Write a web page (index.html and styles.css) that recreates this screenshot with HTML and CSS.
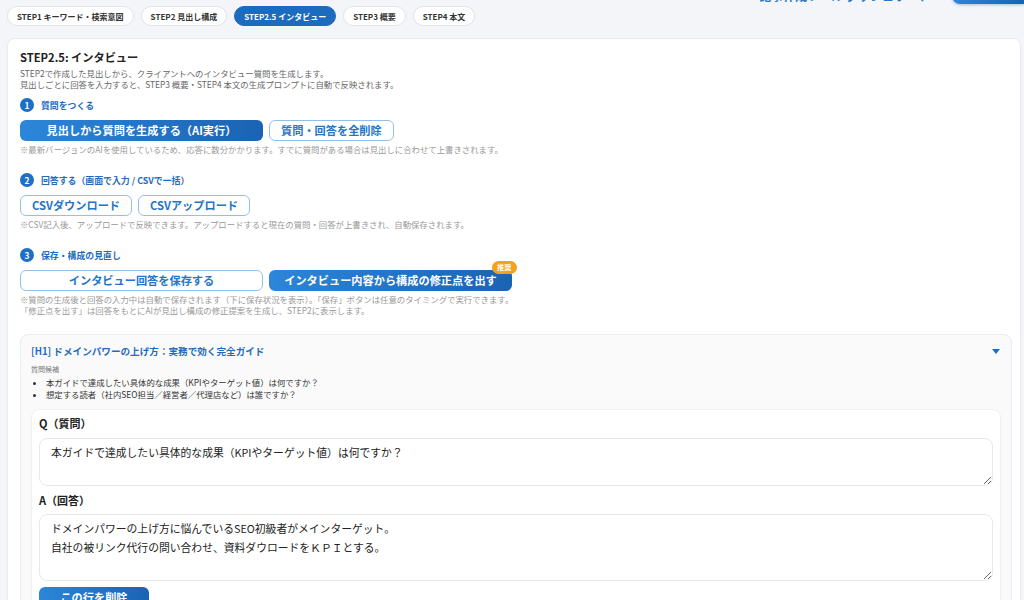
FILE: index.html
```html
<!DOCTYPE html>
<html lang="ja">
<head>
<meta charset="utf-8">
<title>STEP2.5 インタビュー</title>
<link rel="stylesheet" href="styles.css">
</head>
<body>
<header class="topbar">
  <span class="top-link">記事作成ツール ダッシュボード</span>
  <button class="top-btn">ログアウト</button>
</header>

<nav class="tabs">
  <a class="tab">STEP1 キーワード・検索意図</a>
  <a class="tab">STEP2 見出し構成</a>
  <a class="tab active">STEP2.5 インタビュー</a>
  <a class="tab">STEP3 概要</a>
  <a class="tab">STEP4 本文</a>
</nav>

<main class="card">
  <h1 class="title">STEP2.5: インタビュー</h1>
  <p class="desc">STEP2で作成した見出しから、クライアントへのインタビュー質問を生成します。<br>見出しごとに回答を入力すると、STEP3 概要・STEP4 本文の生成プロンプトに自動で反映されます。</p>

  <section class="step first">
    <div class="step-head"><span class="num">1</span><span class="step-label">質問をつくる</span></div>
    <div class="btn-row">
      <button class="btn fill wide">見出しから質問を生成する（AI実行）</button>
      <button class="btn outline">質問・回答を全削除</button>
    </div>
    <p class="note">※最新バージョンのAIを使用しているため、応答に数分かかります。すでに質問がある場合は見出しに合わせて上書きされます。</p>
  </section>

  <section class="step">
    <div class="step-head"><span class="num">2</span><span class="step-label">回答する（画面で入力 / CSVで一括）</span></div>
    <div class="btn-row">
      <button class="btn outline">CSVダウンロード</button>
      <button class="btn outline">CSVアップロード</button>
    </div>
    <p class="note">※CSV記入後、アップロードで反映できます。アップロードすると現在の質問・回答が上書きされ、自動保存されます。</p>
  </section>

  <section class="step">
    <div class="step-head"><span class="num">3</span><span class="step-label">保存・構成の見直し</span></div>
    <div class="btn-row">
      <button class="btn outline wide">インタビュー回答を保存する</button>
      <button class="btn fill wide badge-host">インタビュー内容から構成の修正点を出す<span class="badge">推奨</span></button>
    </div>
    <p class="note">※質問の生成後と回答の入力中は自動で保存されます（下に保存状況を表示）。「保存」ボタンは任意のタイミングで実行できます。<br>「修正点を出す」は回答をもとにAIが見出し構成の修正提案を生成し、STEP2に表示します。</p>
  </section>

  <section class="heading-card">
    <div class="heading-head">
      <span class="heading-title">[H1] ドメインパワーの上げ方：実務で効く完全ガイド</span>
      <span class="caret"></span>
    </div>
    <div class="cand-label">質問候補</div>
    <ul class="cand-list">
      <li>本ガイドで達成したい具体的な成果（KPIやターゲット値）は何ですか？</li>
      <li>想定する読者（社内SEO担当／経営者／代理店など）は誰ですか？</li>
    </ul>

    <div class="qa-card">
      <label class="qa-label">Q（質問）</label>
      <textarea class="qa-input q">本ガイドで達成したい具体的な成果（KPIやターゲット値）は何ですか？</textarea>
      <label class="qa-label">A（回答）</label>
      <textarea class="qa-input a">ドメインパワーの上げ方に悩んでいるSEO初級者がメインターゲット。
自社の被リンク代行の問い合わせ、資料ダウロードをＫＰＩとする。</textarea>
      <button class="btn fill del">この行を削除</button>
    </div>
  </section>
</main>
</body>
</html>
```

FILE: styles.css
```css
* { box-sizing: border-box; }

html, body { margin: 0; padding: 0; }

body {
  background: #f3f5f9;
  font-family: "Noto Sans CJK JP", "Noto Sans", sans-serif;
  color: #222;
  overflow: hidden;
}

.topbar {
  height: 30px;
  margin-top: -26px;
  display: flex;
  justify-content: flex-end;
  align-items: flex-end;
}

.top-link {
  color: #2a78c8;
  font-size: 12px;
  font-weight: 700;
  line-height: 14px;
  margin-right: 22px;
  margin-bottom: 1px;
}

.top-btn {
  width: 72px;
  height: 30px;
  border: none;
  border-radius: 0 0 0 8px;
  background: linear-gradient(90deg, #2d87da, #1b62b3);
  color: #fff;
  font-family: inherit;
  font-size: 11px;
  font-weight: 700;
  box-shadow: 0 1px 3px rgba(30, 90, 160, .35);
}

.tabs {
  display: flex;
  gap: 7px;
  padding-left: 7px;
  margin-top: 2px;
}

.tab {
  height: 20px;
  padding: 0 9px;
  display: flex;
  align-items: center;
  background: #fff;
  border: 1px solid #dfe3e8;
  border-radius: 10px;
  font-size: 8px;
  font-weight: 700;
  color: #333;
  white-space: nowrap;
}

.tab.active {
  background: #1c6bbf;
  border-color: #1c6bbf;
  color: #fff;
}

.card {
  margin: 12px 3px 0 7px;
  background: #fff;
  border: 1px solid #e8ebf0;
  border-radius: 8px;
  padding: 10px 8px 0 12px;
  height: 600px;
}

.title {
  margin: 0;
  font-size: 11.2px;
  line-height: 16px;
  font-weight: 700;
  color: #222;
}

.desc {
  margin: 2.5px 0 0;
  font-size: 8.4px;
  line-height: 11px;
  color: #666;
}

.step { margin-top: 18.5px; }
.step.first { margin-top: 8.5px; }

.step-head {
  display: flex;
  align-items: center;
  gap: 7px;
  height: 14px;
}

.num {
  width: 14px;
  height: 14px;
  border-radius: 50%;
  background: #1f6fc6;
  color: #fff;
  font-size: 8.4px;
  font-weight: 700;
  display: flex;
  align-items: center;
  justify-content: center;
}

.step-label {
  font-size: 8.9px;
  font-weight: 700;
  color: #1f6cbf;
}

.btn-row {
  display: flex;
  gap: 6px;
  margin-top: 8px;
}

.btn {
  height: 21px;
  padding: 0 11px;
  border-radius: 6px;
  font-family: inherit;
  font-size: 11.2px;
  font-weight: 700;
  line-height: 1;
  white-space: nowrap;
  display: inline-flex;
  align-items: center;
  justify-content: center;
}

.btn.wide { width: 243px; }

.btn.fill {
  background: linear-gradient(90deg, #2c86d9, #1b63b4);
  border: none;
  color: #fff;
}

.btn.outline {
  background: #fff;
  border: 1px solid #93c0ea;
  color: #2475c8;
}

.badge-host { position: relative; }

.badge {
  position: absolute;
  right: -5px;
  top: -9px;
  height: 13px;
  padding: 0 5.5px;
  border-radius: 7px;
  background: #f5a11c;
  color: #fff;
  font-size: 7.2px;
  font-weight: 700;
  display: flex;
  align-items: center;
}

.note {
  margin: 2.5px 0 0;
  font-size: 8.4px;
  line-height: 11px;
  color: #999;
}

.heading-card {
  margin-top: 18.5px;
  background: #fafafa;
  border: 1px solid #eceef1;
  border-radius: 8px;
  padding: 9px 10px 10px 10px;
}

.heading-head {
  display: flex;
  align-items: center;
  justify-content: space-between;
  height: 14px;
}

.heading-title {
  font-size: 9.6px;
  font-weight: 700;
  color: #1f6cbf;
}

.caret {
  width: 0;
  height: 0;
  border-left: 4.5px solid transparent;
  border-right: 4.5px solid transparent;
  border-top: 5px solid #1f6cc2;
  margin-right: 1px;
}

.cand-label {
  margin-top: 6px;
  font-size: 7px;
  line-height: 10px;
  color: #777;
}

.cand-list {
  margin: 2px 0 0;
  padding-left: 15px;
  font-size: 8.4px;
  line-height: 12px;
  color: #333;
}

.qa-card {
  margin-top: 9px;
  background: #fff;
  border: 1px solid #eef0f3;
  border-radius: 8px;
  padding: 5px 7px 8px 7px;
  display: flex;
  flex-direction: column;
  align-items: flex-start;
}

.qa-label {
  font-size: 11px;
  line-height: 16px;
  font-weight: 700;
  color: #222;
  margin-top: 6px;
}

.qa-label:first-child { margin-top: 0; }

.qa-input {
  display: block;
  width: 100%;
  margin-top: 6.5px;
  border: 1px solid #e6e8eb;
  border-radius: 8px;
  padding: 4px 11px;
  font-family: inherit;
  font-size: 10.8px;
  line-height: 19px;
  color: #222;
  background: #fff;
  resize: vertical;
  overflow: hidden;
}

.qa-input.q { height: 48px; }
.qa-input.a { height: 67px; }

.btn.del {
  margin-top: 6px;
  width: 110px;
}
```
